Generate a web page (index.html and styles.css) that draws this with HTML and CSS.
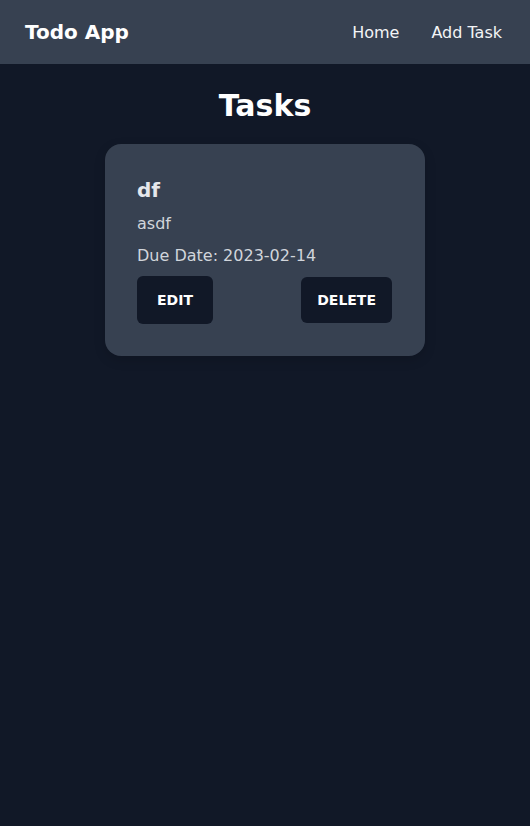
FILE: index.html
```html
<!DOCTYPE html>
<html>
<head>
<meta charset="utf-8">
<link rel="stylesheet" href="styles.css">
</head>
<body>
<header class="nav">
  <div class="brand">Todo App</div>
  <nav class="links">
    <a href="#">Home</a>
    <a href="#">Add Task</a>
  </nav>
</header>
<main class="main">
  <h1 class="title">Tasks</h1>
  <div class="card">
    <h2 class="task-name">df</h2>
    <p class="task-desc">asdf</p>
    <p class="task-date">Due Date: 2023-02-14</p>
    <div class="actions">
      <a href="#" class="btn btn-edit">Edit</a>
      <button class="btn btn-delete">Delete</button>
    </div>
  </div>
</main>
</body>
</html>
```
FILE: styles.css
```css
* { box-sizing: border-box; }
html, body {
  margin: 0;
  padding: 0;
  background: #111827;
  font-family: "DejaVu Sans", sans-serif;
  color: #ffffff;
  height: 100%;
}
.nav {
  height: 64px;
  background: #374151;
  display: flex;
  align-items: center;
  justify-content: space-between;
  padding: 0 28px 0 25px;
}
.brand {
  font-size: 20px;
  font-weight: bold;
  color: #ffffff;
}
.links {
  display: flex;
  gap: 32px;
}
.links a {
  color: #f3f4f6;
  text-decoration: none;
  font-size: 16px;
}
.main {
  display: flex;
  flex-direction: column;
  align-items: center;
  padding-top: 24px;
}
.title {
  margin: 0 0 20px;
  font-size: 30px;
  line-height: 36px;
  font-weight: bold;
  color: #ffffff;
}
.card {
  width: 320px;
  background: #374151;
  border-radius: 16px;
  padding: 32px 33px 32px 32px;
  box-shadow: 0 4px 12px rgba(0,0,0,0.15);
}
.task-name {
  margin: 0 0 8px;
  font-size: 20px;
  line-height: 28px;
  font-weight: bold;
  color: #e5e7eb;
}
.task-desc, .task-date {
  margin: 0 0 8px;
  font-size: 16px;
  line-height: 24px;
  color: #d1d5db;
}
.actions {
  display: flex;
  justify-content: space-between;
  align-items: center;
}
.btn {
  background: #111827;
  color: #ffffff;
  font-family: "DejaVu Sans", sans-serif;
  font-weight: bold;
  font-size: 14px;
  text-transform: uppercase;
  border: none;
  border-radius: 6px;
  text-decoration: none;
  line-height: 24px;
  display: inline-block;
}
.btn-edit {
  padding: 12px 20px;
}
.btn-delete {
  padding: 11px 16px;
}
```
